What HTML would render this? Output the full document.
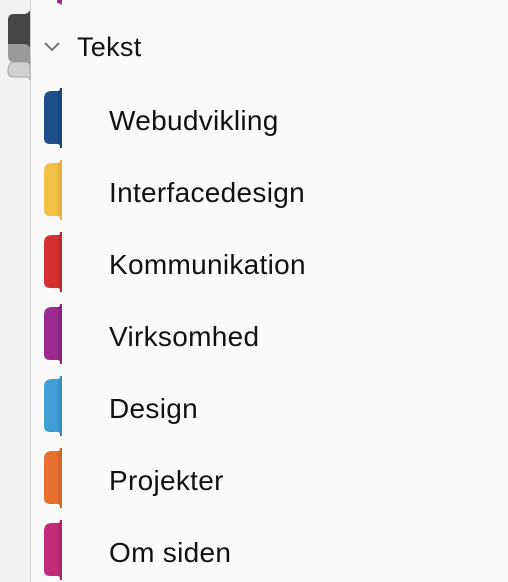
<!DOCTYPE html>
<html><head><meta charset="utf-8"><style>
html,body{margin:0;padding:0;width:508px;height:582px;overflow:hidden;background:#fafafa;font-family:"Liberation Sans",Arial,sans-serif}
.side{position:absolute;left:0;top:0;width:30px;height:582px;background:#f2f2f2;border-right:1px solid #cfcfcf}
.t{position:absolute;font-size:28px;letter-spacing:0.3px;color:#111;line-height:1}
</style></head><body>
<div class="side"></div>
<svg width="508" height="582" style="position:absolute;left:0;top:0">
  <path d="M8 72 Q8 62 14 62 L26 62 Q29 62 30 58 L30 80 Q29 77 26 77 L14 77 Q8 77 8 72Z" fill="#d0d0d0" stroke="#aaa" stroke-width="1"/>
  <path d="M8 44 L30 44 L30 66 Q29 62 24 62 L14 62 Q8 62 8 56Z" fill="#9a9a9a"/>
  <path d="M8 20 Q8 14 14 14 L24 14 Q28 14 30 10 L30 48 Q28 44 24 44 L8 44Z" fill="#464646"/>
  <path d="M57 0 L62 0 L62 5 Q59 3 57 3Z" fill="#9b2a8e"/>
  <path d="M45 43 L52 50 L59 43" fill="none" stroke="#777" stroke-width="2"/>
  <g id="tabs"></g>
</svg>
<div class="t" style="left:77px;top:34px;font-size:27px">Tekst</div>
<div class="t" style="left:109px;top:107px">Webudvikling</div>
<div class="t" style="left:109px;top:179px">Interfacedesign</div>
<div class="t" style="left:109px;top:251px">Kommunikation</div>
<div class="t" style="left:109px;top:323px">Virksomhed</div>
<div class="t" style="left:109px;top:395px">Design</div>
<div class="t" style="left:109px;top:467px">Projekter</div>
<div class="t" style="left:109px;top:539px">Om siden</div>
<script>
var c=[["#1f4f8a","#1a4680"],["#f2c044","#e6b23a"],["#d63130","#c52a2a"],["#9c2a8f","#8c2380"],["#40a0d6","#3590c8"],["#e8702f","#d86428"],["#c42c7a","#b0246c"]];
var g=document.getElementById('tabs'),s='';
c.forEach(function(k,i){var y=88+72*i;
s+='<path d="M44 '+(y+11)+' Q44 '+(y+3)+' 52 '+(y+3)+' L58 '+(y+3)+' L58 '+(y+56)+' L50 '+(y+56)+' Q44 '+(y+56)+' 44 '+(y+50)+'Z" fill="'+k[0]+'"/>';
s+='<path d="M58 '+(y+3)+' Q60 '+(y+3)+' 60 '+y+' L62 '+y+' L62 '+(y+60)+' L60 '+(y+60)+' Q60 '+(y+56)+' 58 '+(y+56)+'Z" fill="'+k[1]+'"/>';});
g.innerHTML=s;
</script>
</body></html>
